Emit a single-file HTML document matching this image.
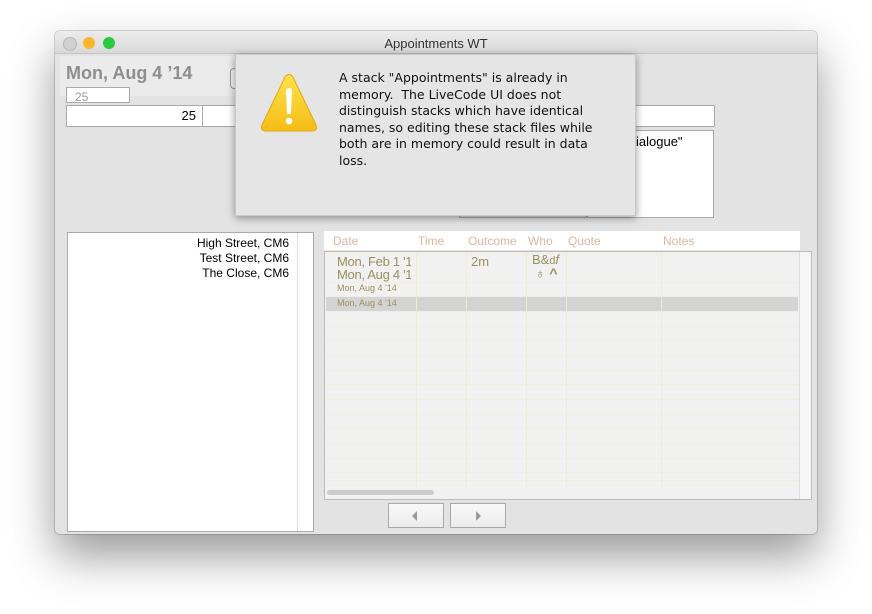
<!DOCTYPE html>
<html><head><style>
body{margin:0;width:872px;height:614px;background:#fff;position:relative;overflow:hidden;font-family:"Liberation Sans",sans-serif}
.a{position:absolute}
.win{left:55px;top:31px;width:762px;height:503px;background:#e3e3e3;border-radius:5px;box-shadow:0 22px 45px rgba(0,0,0,.4),0 0 0 1px rgba(0,0,0,.15)}
.tb{left:0;top:0;width:762px;height:22px;background:linear-gradient(#ececec,#d9d9d9);border-bottom:1px solid #c4c4c4;border-radius:5px 5px 0 0;font-size:13px;text-align:center;line-height:25px;color:#333}
.dot{width:12px;height:12px;border-radius:50%;top:6px}
.f{background:#fff;border:1px solid #aaa}
.hl{left:0;width:474px;height:1px;background:#f0eedf}
.vl{top:0;width:1px;height:236px;background:#eeecd9}
.c{color:#9a9060;font-size:12px}
.h{color:#d8b8a0;font-size:12px;top:4px}
</style></head><body>
<div class="a win">
<div class="a tb">Appointments WT</div>
<div class="a dot" style="left:8px;background:#d0d0d0;border:0.5px solid #b8b8b8"></div>
<div class="a dot" style="left:28px;background:#fdb52e"></div>
<div class="a dot" style="left:48px;background:#28c840"></div>
<div class="a" style="left:5px;top:25px;width:200px;height:40px;background:#ebebeb"></div>
<div class="a" style="left:11px;top:32px;font-size:18px;font-weight:bold;color:#8e8e8e">Mon, Aug 4 ’14</div>
<div class="a" style="left:175px;top:37px;width:8px;height:19px;border:1px solid #999;border-radius:4px;background:#f4f4f4"></div>
<div class="a f" style="left:11px;top:56px;width:64px;height:16px;font-size:12px;color:#999;line-height:18px;padding-left:8px;box-sizing:border-box">25</div>
<div class="a f" style="left:11px;top:74px;width:647px;height:20px"></div>
<div class="a" style="left:11px;top:75px;width:130px;text-align:right;font-size:13px;line-height:19px">25</div>
<div class="a" style="left:147px;top:75px;width:1px;height:20px;background:#aaa"></div>
<div class="a f" style="left:532px;top:99px;width:125px;height:86px"></div>
<div class="a" style="left:581px;top:103px;font-size:13px">ialogue"</div>
<div class="a" style="left:404px;top:99px;width:126px;height:86px;border:1px solid #aaa"></div>
<div class="a f" style="left:12px;top:201px;width:245px;height:298px"></div>
<div class="a" style="left:242px;top:202px;width:1px;height:298px;background:#ddd"></div>
<div class="a" style="left:14px;top:205px;width:220px;text-align:right;font-size:12px;line-height:15px">High Street, CM6<br>Test Street, CM6<br>The Close, CM6</div>
<div class="a" style="left:269px;top:200px;width:476px;height:19px;background:#fff"></div>
<div class="a h" style="left:278px;top:203px">Date</div><div class="a h" style="left:363px;top:203px">Time</div><div class="a h" style="left:413px;top:203px">Outcome</div><div class="a h" style="left:473px;top:203px">Who</div><div class="a h" style="left:513px;top:203px">Quote</div><div class="a h" style="left:608px;top:203px">Notes</div>
<div class="a" style="left:269px;top:220px;width:486px;height:247px;background:#f1f1f1;border:1px solid #bbb;overflow:hidden">
<div class="a" style="left:1px;top:45px;width:472px;height:14px;background:#d4d4d4"></div>
<div class="a hl" style="top:1px"></div><div class="a hl" style="top:30px"></div><div class="a hl" style="top:44px"></div><div class="a hl" style="top:59px"></div><div class="a hl" style="top:74px"></div><div class="a hl" style="top:88px"></div><div class="a hl" style="top:103px"></div><div class="a hl" style="top:118px"></div><div class="a hl" style="top:132px"></div><div class="a hl" style="top:147px"></div><div class="a hl" style="top:162px"></div><div class="a hl" style="top:176px"></div><div class="a hl" style="top:191px"></div><div class="a hl" style="top:206px"></div><div class="a hl" style="top:220px"></div><div class="a hl" style="top:228px"></div>
<div class="a vl" style="left:91px"></div><div class="a vl" style="left:141px"></div><div class="a vl" style="left:201px"></div><div class="a vl" style="left:241px"></div><div class="a vl" style="left:336px"></div>
<div class="a" style="left:474px;top:0;width:11px;height:247px;background:#f6f6f6;border-left:1px solid #ddd"></div>
<div class="a" style="left:2px;top:238px;width:107px;height:5px;border-radius:3px;background:#ccc"></div>
<div class="a c" style="left:12px;top:2px;font-size:13px;width:74px;overflow:hidden;white-space:nowrap;letter-spacing:-0.3px">Mon, Feb 1 '10</div>
<div class="a c" style="left:12px;top:15px;font-size:13px;width:74px;overflow:hidden;white-space:nowrap;letter-spacing:-0.3px">Mon, Aug 4 '14</div>
<div class="a c" style="left:12px;top:31px;font-size:9px">Mon, Aug 4 '14</div>
<div class="a c" style="left:12px;top:46px;font-size:9px">Mon, Aug 4 '14</div>
<div class="a c" style="left:146px;top:2px;font-size:13px">2m</div>
<div class="a c" style="left:207px;top:0px;font-size:13px">B&amp;<small>d</small><i>f</i></div>
<div class="a c" style="left:210px;top:13px;font-size:14px;font-weight:bold">♁ ^</div>
</div>
<div class="a" style="left:333px;top:472px;width:54px;height:23px;border:1px solid #aaa;background:linear-gradient(#f8f8f8,#ececec)"><div class="a" style="left:23px;top:7px;border:5px solid transparent;border-right-color:#999;border-left:0"></div></div>
<div class="a" style="left:395px;top:472px;width:54px;height:23px;border:1px solid #aaa;background:linear-gradient(#f8f8f8,#ececec)"><div class="a" style="left:25px;top:7px;border:5px solid transparent;border-left-color:#999;border-right:0"></div></div>
</div>
<div class="a" style="left:235px;top:54px;width:401px;height:162px;background:#e5e5e5;box-shadow:0 2px 8px rgba(0,0,0,.4);border:1px solid #c8c8c8;box-sizing:border-box">
<svg class="a" style="left:24px;top:18px" width="58" height="60" viewBox="0 0 58 60"><defs><linearGradient id="g" x1="0" y1="0" x2="0" y2="1"><stop offset="0" stop-color="#fde34a"/><stop offset="1" stop-color="#f5bd17"/></linearGradient></defs><path d="M25 4 Q29 -1 33 4 L56 52 Q58 58 52 58 L6 58 Q0 58 2 52 Z" fill="url(#g)" stroke="#e0a810"/><path d="M26 17 Q29 13 32 17 L31 41 L27 41 Z" fill="#fff"/><circle cx="29" cy="48" r="3.3" fill="#fff"/></svg>
<div class="a" style="left:103px;top:15px;width:280px;font-family:'DejaVu Sans',sans-serif;font-size:12.5px;line-height:16.5px;color:#111">A stack "Appointments" is already in memory.&nbsp; The LiveCode UI does not distinguish stacks which have identical names, so editing these stack files while both are in memory could result in data loss.</div>
</div>
</body></html>
